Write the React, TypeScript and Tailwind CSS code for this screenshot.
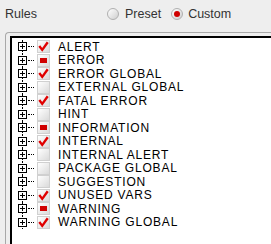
import React from "react";

type Mark = "check" | "partial" | "none";

const rules: [string, Mark][] = [
  ["ALERT", "check"],
  ["ERROR", "partial"],
  ["ERROR GLOBAL", "check"],
  ["EXTERNAL GLOBAL", "none"],
  ["FATAL ERROR", "check"],
  ["HINT", "none"],
  ["INFORMATION", "partial"],
  ["INTERNAL", "check"],
  ["INTERNAL ALERT", "none"],
  ["PACKAGE GLOBAL", "none"],
  ["SUGGESTION", "none"],
  ["UNUSED VARS", "check"],
  ["WARNING", "partial"],
  ["WARNING GLOBAL", "check"],
];

function Radio({ on }: { on?: boolean }) {
  return (
    <span className="w-[12px] h-[12px] rounded-full border border-[#b0b0b0] bg-gradient-to-br from-white to-[#cfcfcf] flex items-center justify-center">
      {on && <span className="w-[6px] h-[6px] rounded-full bg-[#d00000]" />}
    </span>
  );
}

function Box({ mark }: { mark: Mark }) {
  return (
    <span className="w-[13px] h-[13px] border border-[#d0d0d0] bg-gradient-to-br from-white to-[#dadada] flex items-center justify-center">
      {mark === "check" && (
        <svg width="13" height="13" viewBox="0 0 13 13">
          <path d="M1.5 6 L5 10.5 L11.5 1.5" stroke="#e00000" strokeWidth="2.8" fill="none" />
        </svg>
      )}
      {mark === "partial" && <span className="w-[7px] h-[5px] bg-[#d00000]" />}
    </span>
  );
}

function Row({ label, mark }: { label: string; mark: Mark }) {
  return (
    <div className="relative h-[13.5px] flex items-center">
      <span className="absolute left-[8px] top-0 bottom-0 border-l border-dotted border-black" />
      <span className="relative z-10 ml-[4px] w-[9px] h-[9px] border border-black bg-white flex items-center justify-center">
        <svg width="7" height="7" viewBox="0 0 7 7">
          <path d="M1 3.5 H6 M3.5 1 V6" stroke="black" strokeWidth="1" />
        </svg>
      </span>
      <span className="w-[6px] ml-[1px] border-t border-dotted border-black" />
      <span className="ml-[3px]">
        <Box mark={mark} />
      </span>
      <span className="ml-[8px] tracking-[0.8px] text-[12px] leading-none text-black">{label}</span>
    </div>
  );
}

export default function App() {
  return (
    <div className="w-[271px] h-[244px] overflow-hidden bg-[#eeeeee] font-['Liberation_Sans',sans-serif] text-[12.5px] text-[#333]">
      <div className="flex items-center h-[28px] pl-[5px]">
        <span className="w-[102px]">Rules</span>
        <Radio />
        <span className="ml-[6px]">Preset</span>
        <span className="ml-[10px]">
          <Radio on />
        </span>
        <span className="ml-[5px]">Custom</span>
      </div>
      <div className="ml-[5px] mt-[4px] h-[240px] rounded-tl-[4px] border-l border-t border-[#a8a8a8] pl-[4px] pt-[3px]">
        <div className="h-full border-l-2 border-t-2 border-black bg-white pl-[2px] pt-[2px]">
          {rules.map(([l, m]) => (
            <Row key={l} label={l} mark={m} />
          ))}
        </div>
      </div>
    </div>
  );
}
